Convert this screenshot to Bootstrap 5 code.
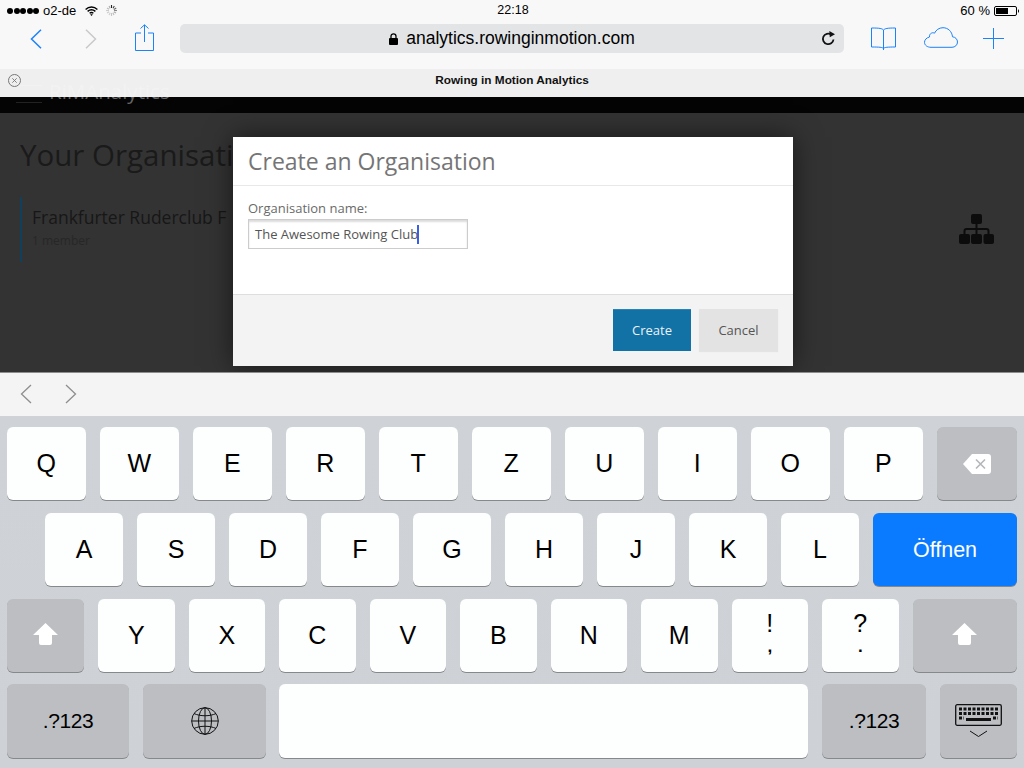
<!DOCTYPE html>
<html lang="en">
<head>
<meta charset="utf-8">
<title>Rowing in Motion Analytics</title>
<link href="https://cdn.jsdelivr.net/npm/bootstrap@5.3.0/dist/css/bootstrap.min.css" rel="stylesheet">
<style>
html,body{margin:0;width:1024px;height:768px;overflow:hidden;background:#f8f8f8}
body{font-family:"Liberation Sans",Arial,sans-serif;color:#000}
.chrome{height:69px;background:#f8f8f8}
.statusline{height:21px;font-size:13px;line-height:21px;padding:0 5px 0 7px}
.status-side{flex:1 1 0}
.sig-dot{width:6px;height:6px;border-radius:50%;background:#000;margin-right:.6px}
.carrier{margin-left:3px;margin-right:9px}
.spin{margin-left:8px}
.clock{font-size:12.5px}
.batt-txt{margin-right:4px}
.toolline{height:48px;padding-left:30px}
.tool-back{width:12px;height:20px;margin-top:8px}
.tool-fwd{width:12px;height:20px;margin-left:43px;margin-top:8px}
.tool-share{width:19px;height:27px;margin-left:38px;margin-top:3px}
.addr{width:664px;height:29px;margin-left:26px;margin-top:3px;background:#e3e4e6;border-radius:5px;font-size:17.5px;padding:0 8px 0 23px}
.addr-txt{width:100%}
.lock{width:9px;height:12px;margin-right:8px}
.reload{width:15px;height:15px;flex:none}
.tool-book{width:25px;height:23px;margin-left:27px;margin-top:6px}
.tool-cloud{width:34px;height:21px;margin-left:28px;margin-top:6px}
.tool-plus{width:21px;height:21px;margin-left:25px;margin-top:7px}
.pagezone{height:303px;background:#333;overflow:hidden}
.tabstrip{left:0;top:0;width:1024px;height:28px;background:rgba(247,247,247,.97);z-index:3;font-size:11.8px;font-weight:700;line-height:22px;text-align:center;color:#111}
.tabclose{left:8px;top:5px;width:13px;height:13px}
.darknav{height:44px;background:#040404;color:#666;font-family:"Open Sans",sans-serif;font-size:20.5px;padding:9px 0 0 49px;line-height:27px}
.burger{left:16px;top:16px;width:26px;height:18px;border-top:1px solid #666;border-bottom:1px solid #222}
.dimcontent{padding:0 30px 0 20px;font-family:"Open Sans",sans-serif;color:#1a1a1a}
.dim-h{font-size:29.5px;font-weight:400;line-height:42px;margin:21px 0 21px;white-space:nowrap}
.dim-row{border-left:2px solid #10405c;height:65px;padding:9px 0 0 10px}
.dim-name{font-size:17.5px;line-height:22px;white-space:nowrap;color:#171717}
.dim-sub{font-size:12px;line-height:18px;margin-top:4px;color:#272727}
.dim-icon{width:35px;height:30px;margin-top:17px;flex:none}
.dlg{left:233px;top:68px;width:560px;height:229px;z-index:2;border:0;border-radius:0;box-shadow:0 0 26px rgba(0,0,0,.55);font-family:"Open Sans",sans-serif;background:#fff}
.dlg .modal-header{height:49px;padding:0 15px;border-bottom:1px solid #e8e8e8;border-radius:0}
.dlg .modal-title{font-size:23px;font-weight:400;color:#757575;line-height:30px}
.dlg .modal-body{height:108px;flex:none;padding:13px 15px 0}
.dlg .form-label{font-size:13px;line-height:18px;color:#6a6a6a;margin:0 0 2px;display:block}
.nameinput{width:220px;height:30px;border:1px solid #ccc;border-radius:0;padding:0 6px;font-size:13px;line-height:28px;color:#555;box-shadow:inset 0 2px 2px rgba(0,0,0,.14);white-space:nowrap}
.caretbar{display:inline-block;width:2px;height:19px;background:#3a5fe0;vertical-align:-5px;margin-left:-1px}
.dlg .modal-footer{height:72px;padding:14px 15px 0;align-items:flex-start;background:#f3f3f3;border-top:1px solid #dedede;border-radius:0;gap:8px;flex-wrap:nowrap}
.dlg .btn{margin:0;border:0;border-radius:0;height:42px;font-size:13px;padding:0}
.btn-make{width:78px;background:#1271a5;color:#eaf2f7;border-top:1px solid #2a83b5!important}
.dlg .btn-stop{width:79px;background:#e3e3e3;color:#555;box-shadow:0 1px 1px rgba(0,0,0,.06);padding-top:1px}
.accbar{height:44px;background:#f4f4f4;border-top:1px solid #8d8d8d;padding-left:20px}
.acc-prev{width:12px;height:20px;margin-top:-2px}
.acc-next{width:12px;height:20px;margin-left:33px;margin-top:-2px}
.kbd{height:352px;background:linear-gradient(#cfd2d6,#ced1d5);padding:11px 7px 0;row-gap:13px}
.kline{height:73px;column-gap:14px}
.kline-1{column-gap:14.5px}
.kline-1 .kl{width:78.5px}
.kline-1 .kgrow{flex:1 1 0}
.kline-2{padding-left:38px}
.kline-3 .kl{width:76.5px}
.kline-4{margin-top:-1px;height:74px}
.kp{background:#fdfefe;border-radius:6px;box-shadow:0 1px 0 #87888a;font-size:25px;line-height:1;color:#000;border:0;padding:0;flex:none}
.kl{width:78px}
.kgrey{background:#bcbec2}
.kblue{background:#0a7bff;color:#fff;font-size:21.5px;flex:1 1 0;padding-top:2px}
.ksym{font-size:21px;letter-spacing:-.4px;padding-bottom:2px}
.kshift-l{width:77px}
.kshift-r{flex:1 1 0}
.kstacked{padding-bottom:4px}
.stack-top{line-height:26px}
.stack-low{font-size:17px;font-weight:700;line-height:21px}
.w122{width:122px}.w123{width:123px}.w529{width:529px;margin-left:-1px}.w104{width:104px}.w77{flex:1 1 0}
.ic-shift{width:25px;height:22px;margin-top:-3px}
.ic-back{width:28px;height:20px}
.ic-globe{width:28px;height:28px}
.ic-kb{width:47px;height:34px;margin-top:-1px}
</style>
</head>
<body>
<div class="chrome d-flex flex-column">
  <div class="statusline d-flex align-items-center">
    <div class="status-side d-flex align-items-center">
      <span class="sig-dot"></span><span class="sig-dot"></span><span class="sig-dot"></span><span class="sig-dot"></span><span class="sig-dot"></span>
      <span class="carrier">o2-de</span>
      <svg width="13" height="10" viewBox="0 0 13 10"><path d="M.6 3.4C4 .2 9 .2 12.4 3.4M2.6 5.4c2.3-2 5.5-2 7.8 0M4.6 7.3c1.2-.9 2.6-.9 3.8 0" fill="none" stroke="#000" stroke-width="1.4"/><path d="M6.5 10 5.2 8.5c.8-.5 1.8-.5 2.6 0z"/></svg>
      <svg class="spin" width="11" height="11" viewBox="0 0 11 11" stroke-width="1.1" fill="none"><path d="M5.5 0v3" stroke="#222"/><path d="M8.3 1 7 3.3" stroke="#444"/><path d="M10.2 3 7.8 4.4" stroke="#666"/><path d="M11 5.5H8" stroke="#888"/><path d="M10 8 7.8 6.7" stroke="#aaa"/><path d="M8 10 6.8 7.8" stroke="#bbb"/><path d="M5.5 11V8" stroke="#c4c4c4"/><path d="M3 10l1.3-2.2" stroke="#ccc"/><path d="M1 8l2.2-1.3" stroke="#ccc"/><path d="M0 5.5h3" stroke="#ccc"/><path d="M1 3l2.2 1.3" stroke="#bbb"/><path d="M3 1l1.2 2.2" stroke="#aaa"/></svg>
    </div>
    <div class="clock">22:18</div>
    <div class="status-side d-flex align-items-center justify-content-end">
      <span class="batt-txt">60 %</span>
      <svg width="25" height="10" viewBox="0 0 25 10"><rect x=".5" y=".5" width="22" height="9" rx="1.5" fill="none" stroke="#000"/><rect x="2" y="2" width="12" height="6" fill="#000"/><path d="M24 3.2c.7.2 1 .9 1 1.8s-.3 1.600-1 1.800z"/></svg>
    </div>
  </div>
  <div class="toolline d-flex align-items-start">
    <svg class="tool-back" viewBox="0 0 12 20"><path d="M11 .8 1.500 10 11 19.200" fill="none" stroke="#1a82fb" stroke-width="1.500"/></svg>
    <svg class="tool-fwd" viewBox="0 0 12 20"><path d="M1 .8 10.500 10 1 19.200" fill="none" stroke="#c9c9cb" stroke-width="1.500"/></svg>
    <svg class="tool-share" viewBox="0 0 19 27"><path d="M6 9H.5v17.500h18V9H13M9.500 18V1M5.500 4.500 9.500.8l4 3.700" fill="none" stroke="#1a82fb" stroke-width="1"/></svg>
    <div class="addr d-flex align-items-center">
      <div class="addr-txt d-flex align-items-center justify-content-center">
        <svg class="lock" viewBox="0 0 9 12"><path d="M2 5V3.300a2.500 2.500 0 0 1 5 0V5" fill="none" stroke="#000" stroke-width="1.300"/><rect y="5" width="9" height="7" rx="1"/></svg>
        <span>analytics.rowinginmotion.com</span>
      </div>
      <svg class="reload" viewBox="0 0 15 15"><path d="M12.500 8.500a5.300 5.300 0 1 1-2.300-5" fill="none" stroke="#111" stroke-width="1.800"/><path d="M8.300 0 14 3.200 8.800 6.300z" fill="#111"/></svg>
    </div>
    <svg class="tool-book" viewBox="0 0 25 23"><path d="M12.500 3C11 1.500 9 1 .5 1v19c8.500 0 10.500.300 12 1.300 1.500-1 3.500-1.300 12-1.300V1c-8.500 0-10.500.5-12 2zm0 0v20" fill="none" stroke="#1a82fb" stroke-width="1" stroke-linejoin="round"/></svg>
    <svg class="tool-cloud" viewBox="0 0 34 21"><path d="M7 20.300h21c3 0 5.500-2.300 5.500-5.300 0-2.800-2.200-5-5-5.200C28 4.500 24 .7 19 .7c-4 0-7 2.300-8.500 5.500-1-.6-2-.6-3-.1-1.500.7-2.200 2.200-2 3.900C2.300 10.800.5 13 .5 15.300c0 2.900 2.800 5 6.500 5z" fill="none" stroke="#1a82fb" stroke-width="1"/></svg>
    <svg class="tool-plus" viewBox="0 0 21 21"><path d="M10.500 0v21M0 10.500h21" fill="none" stroke="#1a82fb" stroke-width="1"/></svg>
  </div>
</div>

<div class="pagezone position-relative">
  <div class="tabstrip position-absolute">
    <svg class="tabclose position-absolute" viewBox="0 0 13 13"><circle cx="6.500" cy="6.500" r="6" fill="none" stroke="#777"/><path d="M4.300 4.300l4.400 4.400M8.700 4.300l-4.400 4.400" stroke="#777" stroke-width=".9"/></svg>
    Rowing in Motion Analytics
  </div>
  <div class="darknav position-relative"><span class="burger position-absolute"></span>RiMAnalytics</div>
  <div class="dimcontent">
    <h1 class="dim-h">Your Organisati</h1>
    <div class="d-flex justify-content-between">
      <div class="dim-row">
        <div class="dim-name">Frankfurter Ruderclub F</div>
        <div class="dim-sub">1 member</div>
      </div>
      <svg class="dim-icon" viewBox="0 0 35 30"><g fill="#0c0c0c"><rect x="12" width="11" height="10" rx="2"/><rect y="20" width="11" height="10" rx="2"/><rect x="12" y="20" width="11" height="10" rx="2"/><rect x="24.500" y="20" width="10.500" height="10" rx="2"/></g><path d="M17.500 9v12M5.500 21v-4q0-2 2-2h20q2 0 2 2v4" fill="none" stroke="#0c0c0c" stroke-width="2"/></svg>
    </div>
  </div>
  <div class="modal-content dlg position-absolute">
    <div class="modal-header"><h2 class="modal-title">Create an Organisation</h2></div>
    <div class="modal-body">
      <label class="form-label">Organisation name:</label>
      <div class="form-control nameinput">The Awesome Rowing Club<span class="caretbar"></span></div>
    </div>
    <div class="modal-footer justify-content-end">
      <button type="button" class="btn btn-make">Create</button>
      <button type="button" class="btn btn-stop">Cancel</button>
    </div>
  </div>
</div>

<div class="accbar d-flex align-items-center">
  <svg class="acc-prev" viewBox="0 0 12 20"><path d="M11 1 1.500 10 11 19" fill="none" stroke="#8e8e90" stroke-width="1.300"/></svg>
  <svg class="acc-next" viewBox="0 0 12 20"><path d="M1 1l9.500 9L1 19" fill="none" stroke="#8e8e90" stroke-width="1.300"/></svg>
</div>

<div class="kbd d-flex flex-column">
  <div class="kline kline-1 d-flex">
    <button class="kp kl">Q</button><button class="kp kl">W</button><button class="kp kl">E</button><button class="kp kl">R</button><button class="kp kl">T</button><button class="kp kl">Z</button><button class="kp kl">U</button><button class="kp kl">I</button><button class="kp kl">O</button><button class="kp kl">P</button>
    <button class="kp kgrey kgrow d-flex align-items-center justify-content-center" aria-label="Delete"><svg class="ic-back" viewBox="0 0 28 20"><path d="M9 0h16a3 3 0 0 1 3 3v14a3 3 0 0 1-3 3H9L0 10z" fill="#fff"/><path d="M13 5.500l9 9M22 5.500l-9 9" stroke="#b4b6ba" stroke-width="1.600"/></svg></button>
  </div>
  <div class="kline kline-2 d-flex">
    <button class="kp kl">A</button><button class="kp kl">S</button><button class="kp kl">D</button><button class="kp kl">F</button><button class="kp kl">G</button><button class="kp kl">H</button><button class="kp kl">J</button><button class="kp kl">K</button><button class="kp kl">L</button>
    <button class="kp kblue">Öffnen</button>
  </div>
  <div class="kline kline-3 d-flex">
    <button class="kp kgrey kshift-l d-flex align-items-center justify-content-center" aria-label="Shift"><svg class="ic-shift" viewBox="0 0 25 22"><path d="M12.500 0 25 12h-6v8a2 2 0 0 1-2 2H8a2 2 0 0 1-2-2v-8H0z" fill="#fff"/></svg></button>
    <button class="kp kl">Y</button><button class="kp kl">X</button><button class="kp kl">C</button><button class="kp kl">V</button><button class="kp kl">B</button><button class="kp kl">N</button><button class="kp kl">M</button>
    <button class="kp kl kstacked"><span class="stack-top d-block">!</span><span class="stack-low d-block">,</span></button><button class="kp kl kstacked"><span class="stack-top d-block">?</span><span class="stack-low d-block">.</span></button>
    <button class="kp kgrey kshift-r d-flex align-items-center justify-content-center" aria-label="Shift"><svg class="ic-shift" viewBox="0 0 25 22"><path d="M12.500 0 25 12h-6v8a2 2 0 0 1-2 2H8a2 2 0 0 1-2-2v-8H0z" fill="#fff"/></svg></button>
  </div>
  <div class="kline kline-4 d-flex">
    <button class="kp kgrey ksym w122">.?123</button>
    <button class="kp kgrey w123 d-flex align-items-center justify-content-center" aria-label="Language"><svg class="ic-globe" viewBox="0 0 28 28" fill="none" stroke="#111" stroke-width="1"><circle cx="14" cy="14" r="13.300"/><ellipse cx="14" cy="14" rx="6.500" ry="13.300"/><path d="M14 .7v26.600M.7 14h26.600M3 6.500c6 3 16 3 22 0M3 21.500c6-3 16-3 22 0"/></svg></button>
    <button class="kp w529" aria-label="Space"></button>
    <button class="kp kgrey ksym w104">.?123</button>
    <button class="kp kgrey w77 d-flex align-items-center justify-content-center" aria-label="Hide keyboard"><svg class="ic-kb" viewBox="0 0 47 34"><rect x=".7" y=".7" width="45.600" height="20.600" rx="1.500" fill="none" stroke="#111" stroke-width="1.300"/><path d="M4 5h39M4 9.500h39M4 14h5M38 14h5" stroke="#111" stroke-width="3" stroke-dasharray="3 1.500" fill="none"/><path d="M11 15.500h25" stroke="#111" stroke-width="3"/><path d="M15 27l8.500 5.500L32 27" fill="none" stroke="#111" stroke-width="1"/></svg></button>
  </div>
</div>
<script src="https://cdn.jsdelivr.net/npm/bootstrap@5.3.0/dist/js/bootstrap.bundle.min.js"></script>
</body>
</html>
